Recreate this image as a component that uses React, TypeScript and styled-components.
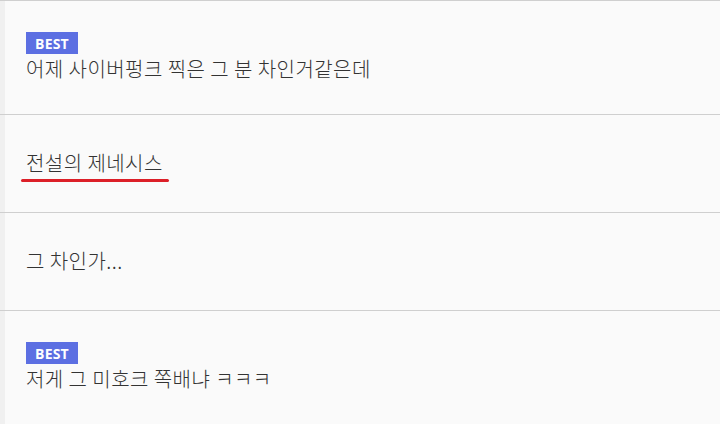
import React from "react";
import styled, { createGlobalStyle } from "styled-components";

const Global = createGlobalStyle`
  html, body {
    margin: 0;
    padding: 0;
    background: linear-gradient(to right, #f0f0f0 0, #f0f0f0 5px, #fafafa 5px, #fafafa 100%);
  }
  body {
    font-family: "Noto Sans CJK KR", "Noto Sans", sans-serif;
    color: #333333;
  }
`;

const List = styled.ul`
  list-style: none;
  margin: 0;
  padding: 0;
  border-top: 1px solid #cfcfcf;
`;

const Row = styled.li`
  box-sizing: border-box;
  min-height: 98px;
  padding: 31px 26px 32px;
  border-bottom: 1px solid #cfcfcf;
  display: flex;
  flex-direction: column;
  justify-content: center;
  align-items: flex-start;
  gap: 2px;
`;

const Badge = styled.span`
  display: inline-flex;
  align-items: center;
  justify-content: center;
  width: 52px;
  height: 22px;
  background: #5c6fe2;
  color: #ffffff;
  font-family: "Open Sans", "Noto Sans", sans-serif;
  font-weight: 700;
  font-size: 14px;
  letter-spacing: 0.2px;
`;

const Text = styled.span<{ $marked?: boolean }>`
  position: relative;
  font-size: 20px;
  font-weight: 300;
  letter-spacing: 0.45px;
  line-height: 26px;
  color: #333333;
  white-space: nowrap;
  ${(p) =>
    p.$marked &&
    `
    &::after {
      content: "";
      position: absolute;
      left: -5px;
      right: -6px;
      bottom: -6px;
      height: 3px;
      border-radius: 2px;
      background: #dc1f28;
    }
  `}
`;

const items = [
  { best: true, text: "어제 사이버펑크 찍은 그 분 차인거같은데" },
  { best: false, text: "전설의 제네시스", marked: true },
  { best: false, text: "그 차인가..." },
  { best: true, text: "저게 그 미호크 쪽배냐 ㅋㅋㅋ" },
];

export default function App() {
  return (
    <>
      <Global />
      <List>
        {items.map((it, i) => (
          <Row key={i}>
            {it.best && <Badge>BEST</Badge>}
            <Text $marked={it.marked}>{it.text}</Text>
          </Row>
        ))}
      </List>
    </>
  );
}
